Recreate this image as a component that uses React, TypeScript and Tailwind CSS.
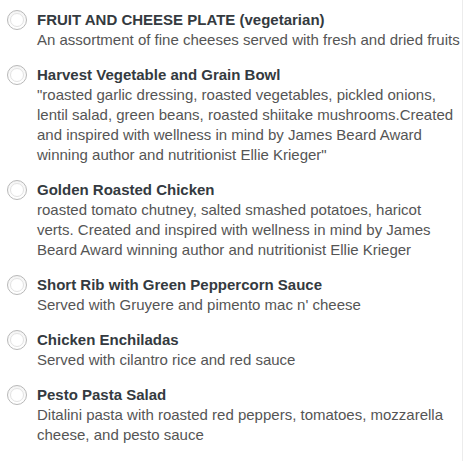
const items = [
  {
    title: "FRUIT AND CHEESE PLATE (vegetarian)",
    desc: "An assortment of fine cheeses served with fresh and dried fruits",
  },
  {
    title: "Harvest Vegetable and Grain Bowl",
    desc: "\"roasted garlic dressing, roasted vegetables, pickled onions, lentil salad, green beans, roasted shiitake mushrooms.Created and inspired with wellness in mind by James Beard Award winning author and nutritionist Ellie Krieger\"",
  },
  {
    title: "Golden Roasted Chicken",
    desc: "roasted tomato chutney, salted smashed potatoes, haricot verts. Created and inspired with wellness in mind by James Beard Award winning author and nutritionist Ellie Krieger",
  },
  {
    title: "Short Rib with Green Peppercorn Sauce",
    desc: "Served with Gruyere and pimento mac n' cheese",
  },
  {
    title: "Chicken Enchiladas",
    desc: "Served with cilantro rice and red sauce",
  },
  {
    title: "Pesto Pasta Salad",
    desc: "Ditalini pasta with roasted red peppers, tomatoes, mozzarella cheese, and pesto sauce",
  },
];

export default function App() {
  return (
    <div
      className="w-[464px] h-[461px] bg-white flex"
      style={{ fontFamily: '"Liberation Sans", Arial, sans-serif' }}
    >
      <div className="w-[462px] pt-[10px] pr-[2px] flex flex-col gap-[15px]">
        {items.map((it) => (
          <label key={it.title} className="flex items-start">
            <span className="w-[37px] shrink-0 pl-[7px]">
              <span className="w-[20px] h-[20px] rounded-full border border-[#b8b8b8] bg-gradient-to-b from-[#f4f4f4] to-white flex items-center justify-center">
                <span className="w-[14px] h-[14px] rounded-full border border-[#e2e2e2] bg-white block" />
              </span>
            </span>
            <span className="flex-1 text-[15px] leading-[20px]">
              <span className="block font-bold text-[#343a40]">{it.title}</span>
              <span className="block text-[#555]">{it.desc}</span>
            </span>
          </label>
        ))}
      </div>
      <div className="w-px bg-[#ececec]" />
    </div>
  );
}
